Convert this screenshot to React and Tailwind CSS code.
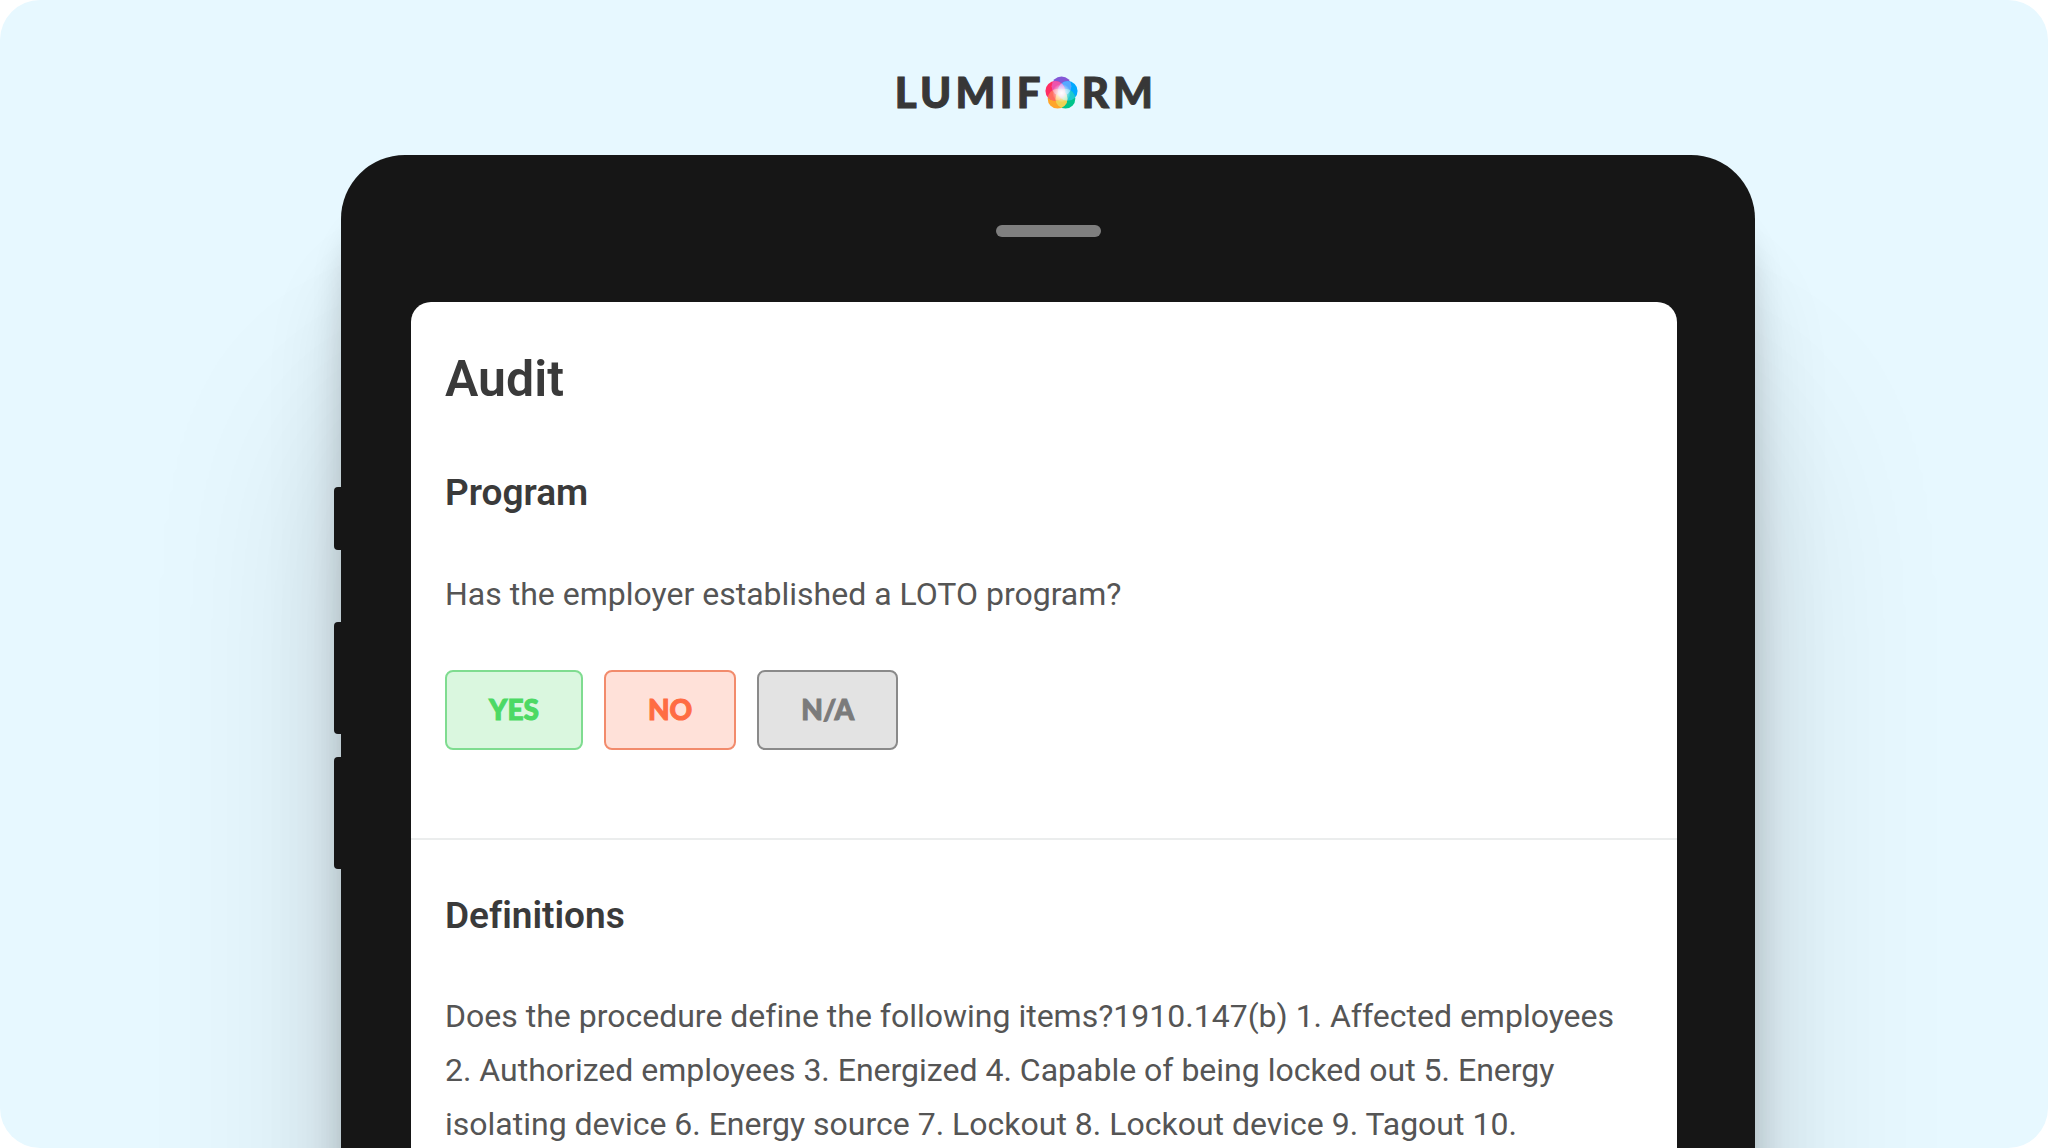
const sideKeys = ["h-[63px]", "mt-[72px] h-[112px]", "mt-[23px] h-[112px]"];

const answers = [
  { label: "YES", look: "border-[#7fdc90] bg-[#daf7df] text-[#4cd964]" },
  { label: "NO", look: "border-[#f28b6c] bg-[#ffe1d9] text-[#ff6c43]" },
  { label: "N/A", look: "border-[#8a8a8a] bg-[#e3e3e3] text-[#7b7b7b]" },
];

const petals = [
  { id: "violet", cx: 16, cy: 10, fill: "#8357d6" },
  { id: "blue", cx: 22, cy: 14.5, fill: "#00a9ff" },
  { id: "green", cx: 19.8, cy: 22, fill: "#00c48a" },
  { id: "orange", cx: 12.2, cy: 22, fill: "#ffa52b" },
  { id: "pink", cx: 10, cy: 14.5, fill: "#ff2d63" },
];

const overlaps = [
  { a: 0, b: 1, fill: "#86a8ff" },
  { a: 1, b: 2, fill: "#2fcdf2" },
  { a: 2, b: 3, fill: "#e3ea6a" },
  { a: 3, b: 4, fill: "#ff8f5e" },
  { a: 4, b: 0, fill: "#e46ad6" },
  { a: 0, b: 2, fill: "#9fe0ff" },
  { a: 1, b: 3, fill: "#c9f3e4" },
  { a: 2, b: 4, fill: "#ffe27a" },
  { a: 3, b: 0, fill: "#ffb3a6" },
  { a: 4, b: 1, fill: "#dcb4ff" },
];

function LogoMark() {
  return (
    <svg viewBox="0 0 32 32" className="h-[33px] w-[33px]" aria-hidden="true">
      <defs>
        {petals.map((p) => (
          <clipPath key={p.id} id={p.id}>
            <circle cx={p.cx} cy={p.cy} r="9.6" />
          </clipPath>
        ))}
        <radialGradient id="glow" cx="16" cy="16.5" r="9" gradientUnits="userSpaceOnUse">
          <stop offset="0" stopColor="#fff" />
          <stop offset="0.35" stopColor="#fff" stopOpacity="0.75" />
          <stop offset="1" stopColor="#fff" stopOpacity="0" />
        </radialGradient>
      </defs>
      {petals.map((p) => (
        <circle key={p.id} cx={p.cx} cy={p.cy} r="9.6" fill={p.fill} />
      ))}
      {overlaps.map((o) => (
        <circle
          key={o.fill}
          cx={petals[o.a].cx}
          cy={petals[o.a].cy}
          r="9.6"
          fill={o.fill}
          fillOpacity="0.65"
          clipPath={`url(#${petals[o.b].id})`}
        />
      ))}
      <circle cx="16" cy="16.5" r="9" fill="url(#glow)" />
    </svg>
  );
}

function Logo() {
  return (
    <div
      role="img"
      aria-label="Lumiform"
      className="flex items-center justify-center pl-1 font-['Lato',sans-serif] text-[42px] leading-[52px] font-black tracking-widest text-[#373737] [-webkit-text-stroke:1px_#373737]"
    >
      <span>LUMIF</span>
      <LogoMark />
      <span className="ml-1">RM</span>
    </div>
  );
}

export default function App() {
  return (
    <div className="h-screen bg-white font-['Roboto',sans-serif] [font-variant-ligatures:none]">
      <main className="flex h-full flex-col overflow-hidden rounded-[40px] bg-[#e7f8ff]">
        <header className="pt-[66px] pb-[37px]">
          <Logo />
        </header>

        <div className="relative mr-[293px] ml-[341px] flex-1 shrink-0 rounded-t-[64px] bg-[#161616] shadow-[0_60px_30px_rgba(0,10,15,0.13),0_120px_80px_rgba(0,10,15,0.12),0_260px_200px_rgba(0,10,15,0.13)]">
          <div className="absolute top-[332px] -left-[7px] w-[7px]">
            {sideKeys.map((size, i) => (
              <div key={i} className={`${size} rounded-l-sm bg-[#161616]`} />
            ))}
          </div>

          <div className="flex justify-center pt-[70px] pb-[65px]">
            <div className="h-3 w-[105px] rounded-full bg-[#7f7f7f]" />
          </div>

          <div className="mr-[78px] ml-[70px] rounded-t-[20px] bg-white pb-16">
            <section className="border-b-2 border-[#ebeded] px-[34px] pt-[45px] pb-[88px]">
              <h1 className="text-[50px] leading-[64px] font-semibold text-[#3a3a3a]">Audit</h1>
              <h2 className="mt-[58px] text-[37px] leading-[48px] font-semibold text-[#3a3a3a]">Program</h2>
              <p className="mt-[50px] text-[32px] leading-[54px] text-[#555555]">
                Has the employer established a LOTO program?
              </p>
              <div className="mt-[49px] flex gap-[21px]">
                {answers.map((a) => (
                  <button
                    key={a.label}
                    type="button"
                    className={`${a.look} h-20 rounded-lg border-2 px-[42px] pb-0.5 font-['Lato',sans-serif] text-[28px] leading-9 font-black [-webkit-text-stroke:1px_currentColor]`}
                  >
                    {a.label}
                  </button>
                ))}
              </div>
            </section>

            <section className="px-[34px] pt-[52px]">
              <h2 className="text-[37px] leading-[48px] font-semibold text-[#3a3a3a]">Definitions</h2>
              <p className="mt-[49px] text-[32px] leading-[54px] text-[#555555]">
                Does the procedure define the following items?1910.147(b) 1. Affected employees 2.
                Authorized employees 3. Energized 4. Capable of being locked out 5. Energy isolating
                device 6. Energy source 7. Lockout 8. Lockout device 9. Tagout 10.
              </p>
            </section>
          </div>
        </div>
      </main>
    </div>
  );
}
